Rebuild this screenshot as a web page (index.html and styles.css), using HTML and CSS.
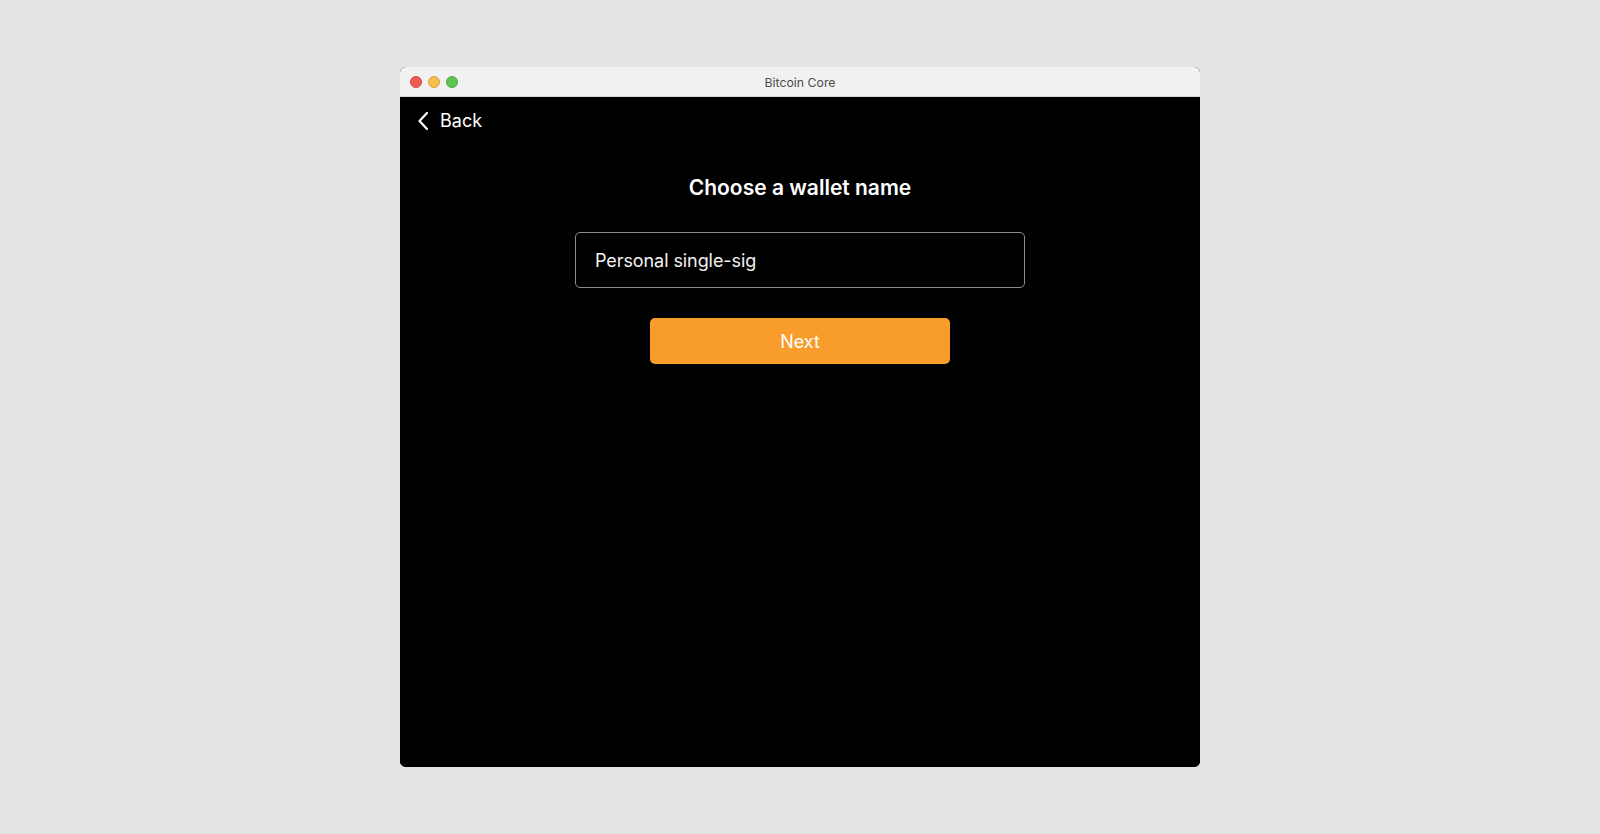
FILE: index.html
```html
<!DOCTYPE html>
<html lang="en">
<head>
<meta charset="utf-8">
<title>Bitcoin Core</title>
<link rel="stylesheet" href="styles.css">
</head>
<body>
<div class="window">
  <div class="titlebar">
    <div class="lights">
      <span class="light red"></span>
      <span class="light yellow"></span>
      <span class="light green"></span>
    </div>
    <div class="title">Bitcoin Core</div>
  </div>
  <div class="content">
    <div class="header">
      <button class="back">
        <svg class="chev" width="12" height="20" viewBox="0 0 12 20"><polyline points="10,2 2.5,10 10,18" fill="none" stroke="#fff" stroke-width="2.2" stroke-linecap="round" stroke-linejoin="round"/></svg>
        <span>Back</span>
      </button>
    </div>
    <div class="form">
      <h1 class="heading">Choose a wallet name</h1>
      <div class="field">Personal single-sig</div>
      <button class="next">Next</button>
    </div>
  </div>
</div>
</body>
</html>
```
FILE: styles.css
```css
* { box-sizing: border-box; }
html, body { margin: 0; height: 100%; }
body {
  background: #e4e4e4;
  display: flex;
  align-items: center;
  justify-content: center;
  font-family: Inter, "Noto Sans", sans-serif;
}
.window {
  width: 800px;
  height: 700px;
  display: flex;
  flex-direction: column;
  border-radius: 6px;
  overflow: hidden;
  background: #000;
}
.titlebar {
  height: 30px;
  flex: none;
  background: #f0f1f0;
  border-bottom: 1px solid #d6d6d6;
  display: flex;
  align-items: center;
  position: relative;
}
.lights {
  display: flex;
  gap: 6px;
  padding-left: 10px;
  padding-top: 1px;
}
.light {
  width: 12px;
  height: 12px;
  border-radius: 50%;
}
.red { background: #ee5c55; border: 0.5px solid #d4473f; }
.yellow { background: #f6bd4f; border: 0.5px solid #dba23a; }
.green { background: #5fc454; border: 0.5px solid #4aa83e; }
.title {
  position: absolute;
  left: 0;
  right: 0;
  text-align: center;
  font-size: 12.3px;
  color: #4d4d4d;
  padding-top: 1px;
}
.content {
  flex: 1;
  background: #000;
  color: #fff;
}
.header {
  padding: 12px 0 0 17px;
}
.back {
  display: flex;
  align-items: center;
  gap: 11px;
  background: none;
  border: 0;
  padding: 0;
  color: #fff;
  font-family: inherit;
  font-size: 18px;
  line-height: 24px;
  cursor: pointer;
}
.chev { display: block; margin-top: -1px; }
.form {
  display: flex;
  flex-direction: column;
  align-items: center;
}
.heading {
  margin: 41px 0 0;
  font-size: 21px;
  line-height: 28px;
  font-weight: 600;
}
.field {
  margin-top: 30px;
  width: 450px;
  height: 56px;
  border: 1px solid #8c8c8c;
  border-radius: 5px;
  padding: 0 20px 0 19px;
  display: flex;
  align-items: center;
  font-size: 18px;
  letter-spacing: -0.08px;
  color: #f2f2f2;
}
.next {
  margin-top: 30px;
  width: 300px;
  height: 46px;
  border: 0;
  border-radius: 5px;
  background: #f89c2c;
  color: #fff;
  font-family: inherit;
  font-size: 18px;
  font-weight: 400;
  cursor: pointer;
}
```
